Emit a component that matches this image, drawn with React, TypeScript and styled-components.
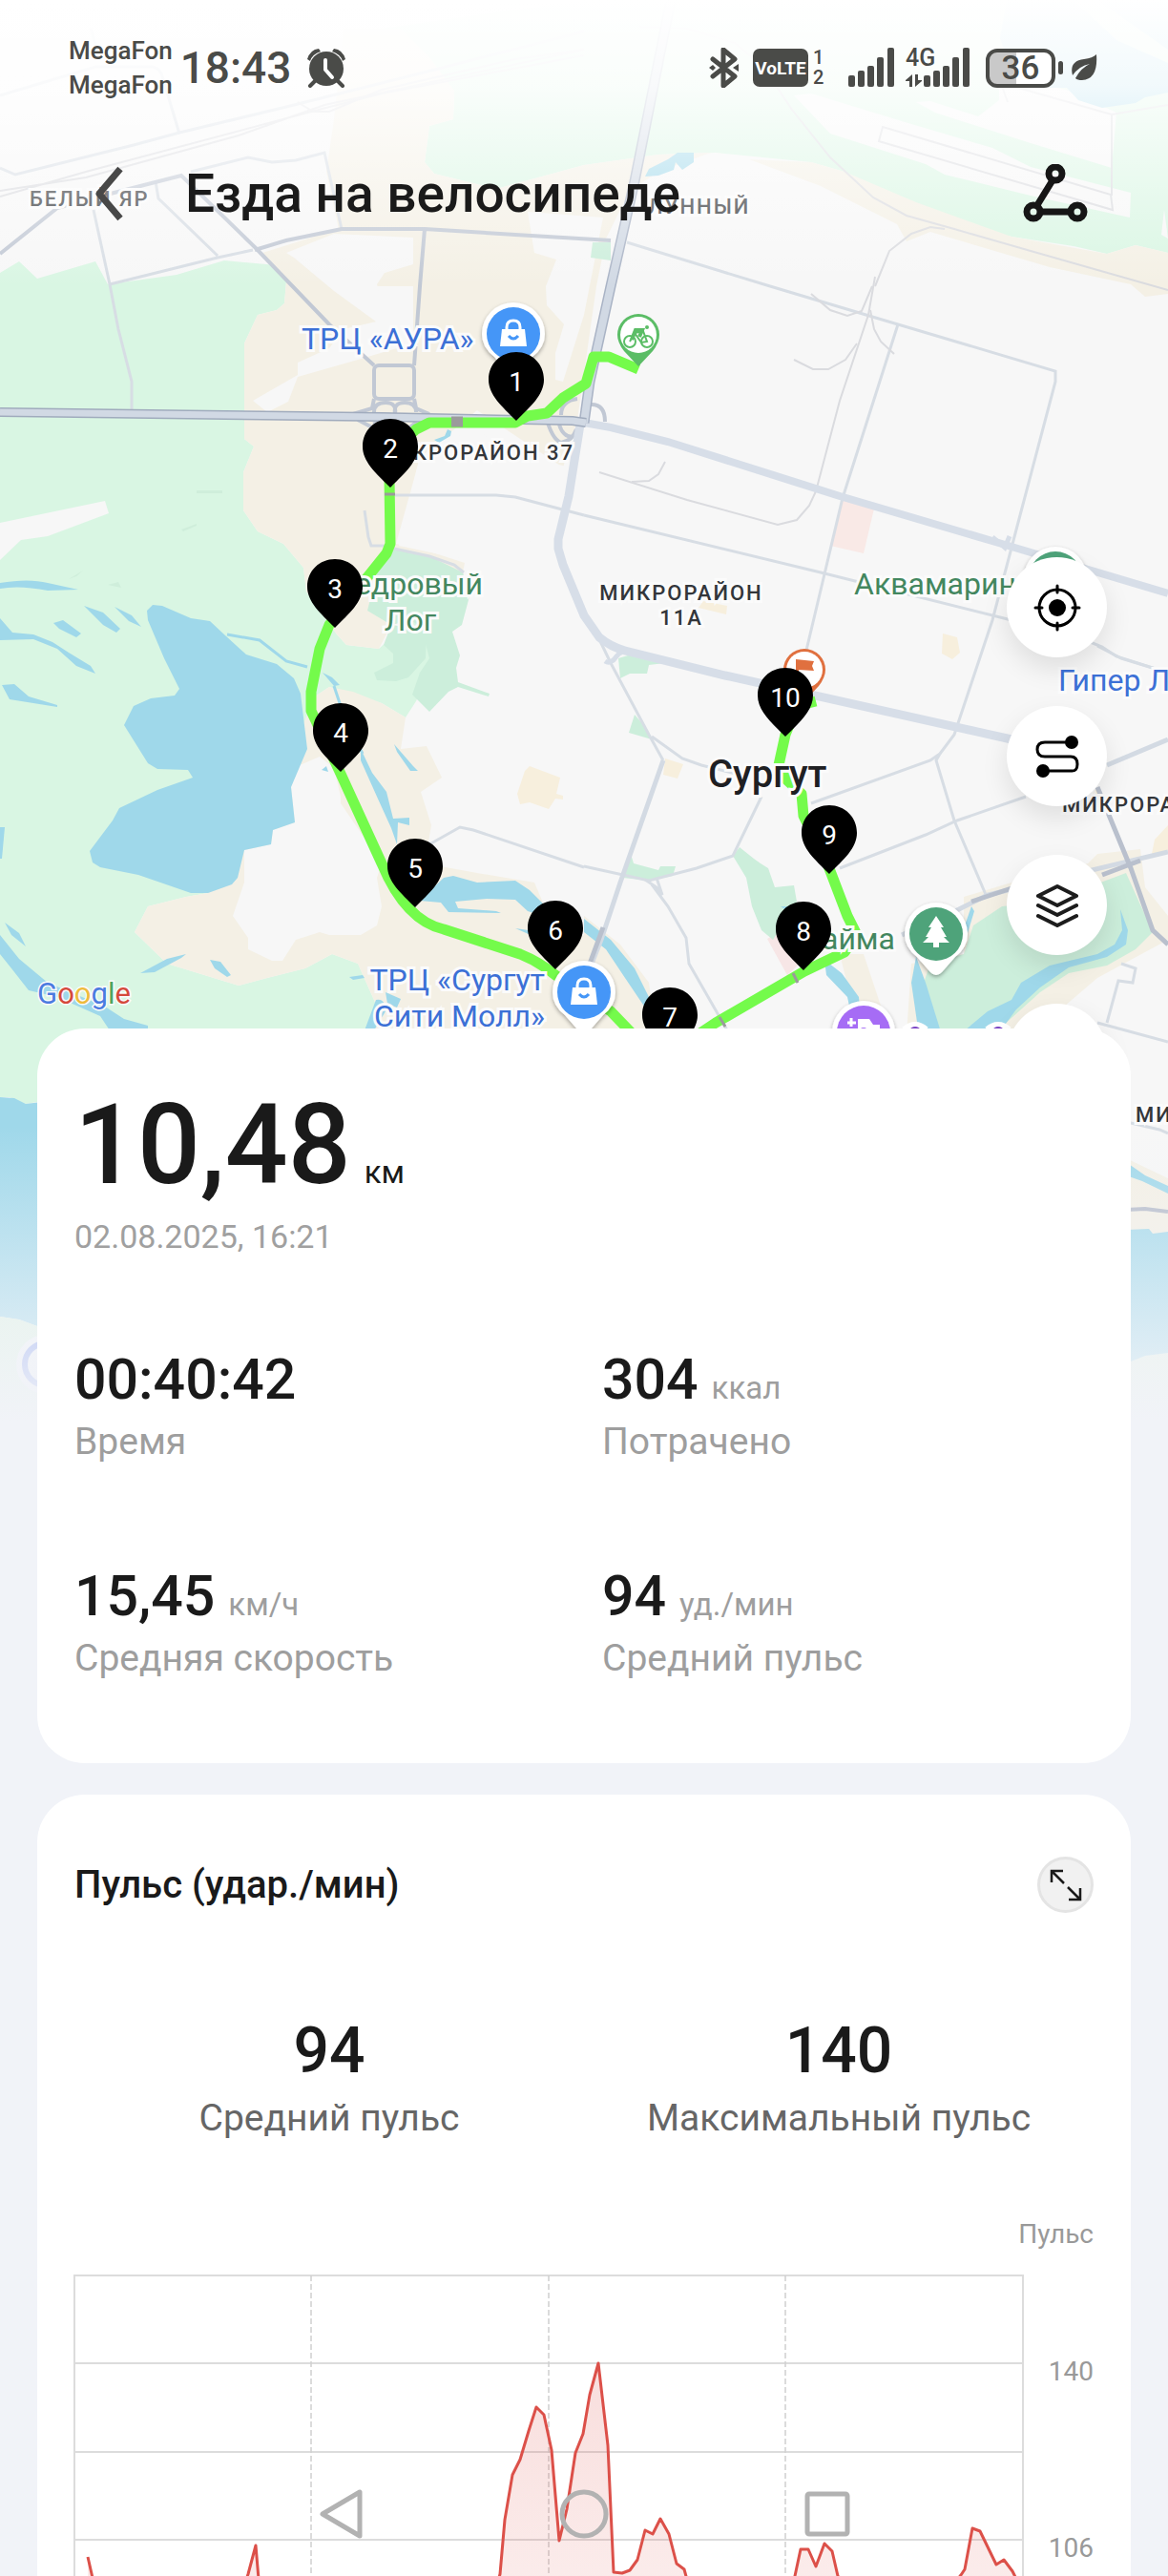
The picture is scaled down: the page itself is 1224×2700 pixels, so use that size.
import React from 'react';
import styled, { createGlobalStyle } from 'styled-components';

const GlobalStyle = createGlobalStyle`
  *, *::before, *::after { box-sizing: border-box; }
  html, body { margin: 0; padding: 0; }
  body { background: #f1f3f8; font-family: Roboto, "Noto Sans", sans-serif; color: #1a1a1a; }
  button { font: inherit; color: inherit; border: 0; padding: 0; background: none; cursor: pointer; }
  h1, h2, p, dl, dd, dt { margin: 0; font-weight: inherit; }
  svg { display: block; }
`;

const Screen = styled.div`
  position: relative;
  height: 100vh;
  overflow: hidden;
  background: #f1f3f8;
`;

const Scroller = styled.main`
  height: 100%;
  overflow-y: auto;
  scrollbar-width: none;
`;

const Content = styled.div`
  position: relative;
`;

/* ---------- map ---------- */

const MapLayer = styled.div`
  position: absolute;
  inset: 0 0 auto;
  height: 1490px;
  display: flex;
  justify-content: center;
  overflow: hidden;
  background: #f7f7f7;
  &::after {
    content: '';
    position: absolute;
    inset: 0;
    background:
      linear-gradient(#ffffff 0, rgba(255, 255, 255, 0.86) 90px, rgba(255, 255, 255, 0.4) 200px, rgba(255, 255, 255, 0) 300px),
      linear-gradient(rgba(241, 243, 248, 0) 1180px, #f1f3f8 1490px);
  }
`;

const MapCanvas = styled.div`
  position: relative;
  flex: none;
  width: 1224px;
  height: 1490px;
`;

const labelTones = { blue: '#3c70d6', green: '#43875f', dark: '#33363a', city: '#1f2023' };

const MapLabel = styled.span<{
  $x: number;
  $y: number;
  $tone: keyof typeof labelTones;
  $kind: 'place' | 'district' | 'city';
  $align?: 'left' | 'center' | 'right';
}>`
  position: absolute;
  left: ${(p) => p.$x}px;
  top: ${(p) => p.$y}px;
  transform: translateX(${(p) => (p.$align === 'center' ? '-50%' : p.$align === 'right' ? '-100%' : '0')});
  text-align: ${(p) => p.$align ?? 'left'};
  white-space: pre;
  color: ${(p) => labelTones[p.$tone]};
  font-size: ${(p) => ({ place: 32, district: 22, city: 40 })[p.$kind]}px;
  line-height: ${(p) => ({ place: 38, district: 26, city: 48 })[p.$kind]}px;
  font-weight: ${(p) => (p.$kind === 'place' ? 400 : 500)};
  letter-spacing: ${(p) => (p.$kind === 'district' ? '2px' : 'normal')};
  -webkit-text-stroke: 6px #fbfbfb;
  paint-order: stroke fill;
`;

const Pin = styled.div<{ $x: number; $y: number }>`
  position: absolute;
  left: ${(p) => p.$x - 29}px;
  top: ${(p) => p.$y - 72}px;
  width: 58px;
  height: 72px;
  padding-top: 14px;
  color: #fff;
  font-size: 28px;
  line-height: 36px;
  text-align: center;
  svg { position: absolute; inset: 0; z-index: -1; }
  isolation: isolate;
`;

const GoogleMark = styled.span`
  position: absolute;
  left: 39px;
  top: 1023px;
  font-size: 31px;
  line-height: 38px;
  color: #4c7be0;
  -webkit-text-stroke: 3px #fbfbfb;
  paint-order: stroke fill;
`;

const Tint = styled.span<{ $c: string }>`
  color: ${(p) => p.$c};
`;

const forest = 'M0 286L20 274L39 292L100 274L113 298L185 288L235 273L290 278L300 295L298 318L290 325L270 330L256 360L256 460L266 468L255 495L255 535L270 557L297 570L318 595L321 620L353 665L363 676L397 680L430 650L460 660L455 690L436 735L425 752L400 737L345 720L330 730L322 785L310 800L262 800L256 885L218 936L195 940L155 950L141 977L175 1010L250 1033L280 1025L320 1015L348 1000L375 1010L395 1055L380 1100L39 1155L27 1157L10 1150L0 1150Z';
const northForest = 'M400 30L612 0L1224 0L1224 265L1190 257L1160 266L1125 258L1060 248L1000 235L960 215L920 200L885 180L850 170L750 160L690 162L612 173L520 198L455 182L445 170L450 132L475 125L476 100Z';
const sandNorth = 'M350 125L360 30L420 30L450 60L476 95L475 125L450 132L445 170L455 182L520 198L612 173L690 162L745 160L690 180L660 200L635 250L625 300L605 440L590 490L500 430L440 480L415 570L450 578L487 590L485 600L430 650L410 655L397 680L363 676L353 665L321 620L318 595L297 570L270 557L255 535L255 495L266 468L256 460L256 360L270 330L290 325L298 318L300 295L275 265L355 240L342 180Z';
const sandSouth = 'M155 950L195 940L218 936L256 885L262 800L310 800L322 785L315 765L330 730L345 720L370 725L400 737L425 752L420 785L447 782L463 815L441 830L452 865L445 905L500 915L560 925L575 960L620 985L640 990L680 1030L690 1100L380 1100L395 1055L375 1010L348 1000L320 1015L280 1025L250 1033L175 1010L141 977Z';
const lake = 'M154 640L160 634L170 635L200 648L220 651L236 666L258 686L290 696L308 711L315 727L322 785L305 825L309 862L286 870L284 885L256 891L249 920L243 927L218 936L200 936L145 917L105 909L97 904L94 892L118 860L125 847L165 828L202 815L197 807L165 806L155 800L130 760L140 740L158 732L183 729L188 722L172 690L155 650Z';
const smallWater = [
  'M0 611Q30 606 50 611L82 618L50 619Q20 613 0 617Z',
  'M0 648L13 663L35 665L55 673L72 684L95 698L100 706L80 698L60 680L35 670L0 671Z',
  'M88 635L108 642L126 659L122 663L108 655Z',
  'M120 636L138 645L148 657L135 651Z',
  'M56 653L66 650L85 664L80 668L62 659Z',
  'M2 718L15 717L30 730L60 739L60 741L10 733Z',
  'M0 980L20 1005L50 1030L110 1055L130 1068L155 1075V1080L115 1080L105 1065L60 1045L30 1038L12 1015L0 1000Z',
  'M5 967L20 978L27 992L12 980Z',
  'M0 867H5L2 900H0Z',
  'M147 1020L175 1005L195 1000L190 1004L162 1019Z',
  'M220 1006L231 1008L242 1022L238 1024L225 1015Z',
  'M366 1024L380 1022L382 1025L370 1027Z',
  'M338 705L348 710L356 718L350 719Z',
  'M378 785L390 810L405 830L412 858L429 857V865L417 862L416 885L410 868L395 835L378 797Z',
  'M413 780L433 803L438 808L430 808L416 788Z',
  'M337 807L342 803L344 809Z',
  'M465 920L475 918L500 925L540 923L555 933L570 948L575 962L553 955L540 943L510 942L477 945L480 952L520 955L525 957L470 956L462 946L440 944Z',
  'M540 973L560 976L556 980Z',
  'M455 461L466 457L469 450L473 452L472 457L460 464Z',
  'M676 185L680 177L700 167L710 160L727 160V170L715 178L708 170L706 178L690 184Z',
  'M612 963L640 985L665 1015L680 1045L684 1068L655 1025L635 995L612 977Z',
  'M864 1006L882 1020L900 1045L902 1068L892 1064L888 1045L866 1022Z',
  'M818 950H834V956H824L832 960Z',
  'M1174 953L1182 975L1180 990L1160 1003L1120 1014L1090 1035L1065 1058L1045 1085H1005L1035 1060L1060 1048L1070 1030L1100 1012L1150 1000L1168 990L1176 975Z',
  'M960 1003L970 1030L987 1085L963 1085L955 1030Z',
  'M1018 950L1021 955L1014 978L1011 970Z',
  'M394 1048Q404 1046 404 1060L392 1080H382Z',
  'M404 1040L420 1047L416 1056L406 1052Z',
];
const park = [
  'M413 575L450 583L485 600L492 625L484 655L474 662L482 687L478 700L480 715L513 727L512 730L480 720L470 725L450 746L432 728L440 705L450 690L446 675V660L430 650L410 655L385 640L395 600Z',
  'M410 655L447 660L446 690L428 710L415 714L395 713L392 705L412 695V685L402 676Z',
  'M648 690L665 685L685 693L697 695L680 697L678 706L660 706L650 711Z',
  'M665 749L659 768L683 775L672 757Z',
  'M775 888L790 900L797 905L805 910L812 930L832 928L835 945L810 985L798 975L788 950L782 920L768 897Z',
  'M661 895L664 905L690 912L692 908L708 908L705 918L680 923L653 920Z',
  'M1180 915L1208 977L1190 995L1160 1012L1120 1020L1090 1040L1040 1085H985L968 1030L975 1010L1010 1000L1020 970L1050 950L1100 945Z',
  'M621 254L640 254L640 273L619 270Z',
];
const blocks = [
  'M550 808L555 803L587 815L583 832L590 834V838L582 837L575 848L555 841L545 843L542 832Z',
  'M988 664L1003 668L1006 684L998 691L987 685Z',
  'M737 630L762 635L761 644L732 637Z',
  'M697 795L716 801L710 816L695 812Z',
  'M1210 880L1224 865V892L1207 895Z',
  'M1150 825L1154 835L1140 840Z',
];
const streets = [
  'M0 176L16 183L140 152L188 139L300 112L420 82L612 33',
  'M0 100L100 70H160Q168 72 170 80L188 140M95 30L104 60',
  'M200 180L260 165L285 170L310 168L340 160L358 240',
  'M98 220L115 298L124 345L138 400L138 430',
  'M163 190L166 208L228 268M115 298L228 270L265 262',
  'M657 254L807 300L941 340L1106 389V400L1069 540L1040 650L1000 770L985 790',
  'M941 340L890 500L883 522L843 690',
  'M612 540L860 600L1060 650M1140 672L1155 678L1170 688L1224 705',
  'M414 519L520 519L540 521L612 540',
  'M382 535L386 563L389 572H406M413 575L450 583L476 592L486 600',
  'M628 670L640 695L680 770L695 797M683 772L715 795L735 802L775 812',
  'M798 835L768 897L730 910L680 923L612 908',
  'M850 842L975 797L985 790L981 797L1000 860L1034 940',
  'M880 910L970 875L1003 860L1075 835',
  'M450 885L482 867L496 870L612 909',
  'M683 927L700 950L719 983L722 1010L765 1085',
  'M1150 677L1175 690L1224 705M1175 1010L1190 1015L1187 1030L1172 1028L1160 1072',
  'M676 922L688 930L694 938L688 920',
];
const rails = [
  'M917 290L910 330L880 420L855 515L848 530L835 545L815 550L720 524L628 495',
  'M850 308L870 325L888 331L903 326L914 300M912 325L916 345L923 358L937 371',
  'M832 377L852 387H868L886 377L898 360M697 484L690 497L680 504L662 505',
  'M0 200L90 186L250 142L340 110L612 52M0 206L90 180L330 116L400 98L612 58M312 107L328 117H345L400 94L540 62L612 52',
  'M670 28L720 30L770 45L800 70L830 115L870 165L915 207L950 226L1000 240L1080 263L1224 304',
  'M917 300L932 263L955 245L975 238L990 240',
  'M925 133L1164 204L1166 220L921 148ZM1048 85L1056 107M1060 90L1165 120V205M1165 120L1224 110',
];
const arterials = [
  'M0 266L60 218L100 207L190 184L268 260L345 340L392 383',
  'M267 262L300 252L358 240L445 240L540 246L640 252M445 240L440 300L434 383',
];
const route = 'M669 387L638 374H622L614 402L590 417L573 433L553 436L540 443H450L436 450L412 472L408 500L409 570L405 580L345 655L335 680L326 725V745L357 811L400 905Q425 965 465 974L545 1000Q565 1008 582 1022L640 1060L690 1112L750 1072L843 1018L885 998L898 980L888 960L867 905L842 855L840 832L825 818L816 802L823 770L835 740L855 735';

function Poi({ x, y, color, children }: { x: number; y: number; color: string; children?: React.ReactNode }) {
  return (
    <g transform={`translate(${x} ${y})`}>
      <path d="M0 -33A33 33 0 0 1 33 0Q33 14 20 24L6 40Q0 46 -6 40L-20 24Q-33 14 -33 0A33 33 0 0 1 0 -33Z" fill="#fff" filter="url(#poiShadow)" />
      <circle r="28" fill={color} />
      {children}
    </g>
  );
}

const Bag = () => (
  <g>
    <path d="M-12 -5H12L14 13H-14Z" fill="#fff" />
    <path d="M-7 -4V-7Q-7 -14 0 -14Q7 -14 7 -7V-4" fill="none" stroke="#fff" strokeWidth="3" />
    <path d="M-5 2Q0 8 5 2" fill="none" stroke="#4596f7" strokeWidth="3" />
  </g>
);

function MapDrawing() {
  return (
    <svg width="1224" height="1490" viewBox="0 0 1224 1490" aria-hidden="true">
      <defs>
        <filter id="poiShadow" x="-30%" y="-30%" width="160%" height="170%">
          <feDropShadow dx="0" dy="2" stdDeviation="2" floodColor="#000" floodOpacity="0.35" />
        </filter>
      </defs>
      <path d={northForest} fill="#d9f6e3" />
      <path d="M832 100L850 98L955 130L1040 155L1080 175L1185 202L1184 228L1080 205L990 183L970 172L870 140Z" fill="#f7f7f7" />
      <path d="M960 107L975 106L1025 122L1047 105V92L1060 80L1120 95L1170 118L1165 176L1080 150L980 118Z" fill="#f7f7f7" />
      <path d="M1055 0L1048 40L1060 75L1100 92H1118L1130 105L1155 113L1190 108L1200 102L1224 97V0Z" fill="#9fd8ea" />
      <path d="M1125 0L1170 42L1224 66V52L1150 0Z" fill="#d9f6e3" />
      <path d="M1220 220L1217 246L1224 250Z" fill="#f7f7f7" />
      <path d="M785 167L850 170L885 180L960 212L1060 248L1160 266L1190 257L1224 265V308L1200 311L1185 298L1100 280L975 243L950 253L940 235L860 195Z" fill="#f4f0e5" />
      <path d={forest} fill="#d9f6e3" />
      <path d={sandNorth} fill="#f4f0e5" />
      <path d="M300 265L350 245L433 249V277L403 286L395 298L405 333L398 340L350 305L308 270Z" fill="#f7f7f7" />
      <path d="M395 300L403 335L360 345L345 365L312 380V393L265 420L280 432L302 421L312 395L375 377L433 360V300Z" fill="#f7f7f7" />
      <path d="M553 222L632 228L612 330L590 400L582 398V370L591 340L573 320L572 300L583 272L560 265Z" fill="#f7f7f7" />
      <path d="M440 478L500 447L525 475L600 490L590 560L480 585L418 572Z" fill="#f7f7f7" />
      <path d={sandSouth} fill="#f4f0e5" />
      <path d="M312 803L335 793L350 805L357 835V842L400 905L395 920L400 950L395 970L378 980L345 980L335 977L310 985L296 1007H285L260 995V983L244 960L256 925V891L284 885L286 870L309 862L305 825Z" fill="#f7f7f7" />
      <path d="M0 548L110 525L114 538L50 562L22 566L0 587Z" fill="#f7f7f7" />
      <path d="M206 514H233V517H206ZM190 555L206 549V551L192 557ZM113 613L124 610L127 616ZM72 607L87 598L80 604Z" fill="#cfeedb" />
      <path d="M1010 940L1060 925L1140 905L1150 895L1195 890L1200 930L1224 960V985L1150 1025L1080 1085H950L955 1010L1010 1000Z" fill="#f4f0e5" />
      <path d="M880 1000L905 1000L925 1060V1085H885L895 1060Z" fill="#f4f0e5" />
      <path d="M612 960L650 990L680 1030V1085H612Z" fill="#f4f0e5" />
      <path d="M882 524L916 533L905 580L870 572Z" fill="#f9e9e6" />
      <path d="M804 984L818 976L838 1010L825 1022Z" fill="#f7e6e6" />
      {park.map((d) => <path key={d} d={d} fill="#cceedb" />)}
      {blocks.map((d) => <path key={d} d={d} fill="#f7efdd" />)}
      <path d={lake} fill="#9fd8ea" />
      {smallWater.map((d) => <path key={d} d={d} fill="#9fd8ea" />)}
      <path d="M238 665L272 671L300 693L322 699M350 719L357 740M375 780L380 790" fill="none" stroke="#9fd8ea" strokeWidth="3" />
      <path d="M0 1150L15 1151L27 1157L60 1153V1390L39 1390L20 1383L0 1380Z" fill="#9fd8ea" />
      <path d="M0 1380L20 1383L39 1390H60V1490H0Z" fill="#dff5e2" />
      <path d="M1180 1214L1224 1235V1295H1180Z" fill="#f4f0e5" />
      <path d="M1180 1218L1200 1232L1224 1243V1251L1197 1238L1180 1232Z" fill="#9fd8ea" />
      <path d="M1180 1289L1204 1288L1208 1293L1224 1291V1490H1180Z" fill="#9fd8ea" />
      <path d="M1180 1429L1200 1421L1224 1418V1490H1180Z" fill="#e7f6e4" />
      <path d="M1180 1268L1200 1267L1224 1270" fill="none" stroke="#b3b9c8" strokeWidth="4" />
      <path d="M1150 1072L1224 1092M1185 1177L1215 1184L1224 1188" fill="none" stroke="#d7dde4" strokeWidth="3" />

      {streets.map((d) => <path key={d} d={d} fill="none" stroke="#d7dde4" strokeWidth="3" />)}
      {rails.map((d) => <path key={d} d={d} fill="none" stroke="#dadbdf" strokeWidth="2" />)}
      {arterials.map((d) => <path key={d} d={d} fill="none" stroke="#c1c8d4" strokeWidth="4" />)}
      <g fill="none" stroke="#c1c8d4" strokeWidth="4">
        <rect x="392" y="383" width="42" height="35" rx="5" />
        <path d="M392 418L390 428L370 434M434 418L436 428L450 434M375 440L405 456M392 432Q392 422 404 422T414 434M436 432Q436 422 424 422T414 434M392 442Q400 456 414 442Q424 456 436 442" />
        <path d="M605 418Q588 420 588 435M572 436Q578 460 588 464Q600 462 604 450M620 424Q634 424 634 442M586 445Q590 458 600 458" />
      </g>
      <path d="M612 443L640 448L700 463L880 520L1050 570L1224 622" fill="none" stroke="#d7dee8" strokeWidth="8" />
      <path d="M608 445L596 520L585 565V575L590 592L612 645L628 668Q640 678 655 682L760 708L1060 775" fill="none" stroke="#d7dee8" strokeWidth="9" />
      <path d="M634 693Q640 697 646 688Q650 682 660 682M1040 563L1053 574L1058 562" fill="none" stroke="#d7dee8" strokeWidth="5" />
      <path d="M695 797L650 925L630 985L620 1010M1160 802L1224 775M945 980L1005 953L1035 938L1224 893" fill="none" stroke="#d3dae3" strokeWidth="5" />
      <path d="M1018 945L1075 926M1155 917L1195 902M632 972L618 1010M1150 825L1185 910L1208 975L1224 990" fill="none" stroke="#b9c0cd" strokeWidth="5" />
      <path d="M703 0L665 190L640 300L618 400L612 443" fill="none" stroke="#a9b3c5" strokeWidth="11" />
      <path d="M703 0L665 190L640 300L618 400L612 443" fill="none" stroke="#d1d9e4" strokeWidth="8" />
      <path d="M0 432L400 437L600 441L614 443" fill="none" stroke="#a0abbd" strokeWidth="10" />
      <path d="M0 432L400 437L600 441L614 443" fill="none" stroke="#d1d9e4" strokeWidth="7" />

      <path d={route} fill="none" stroke="#74fb4b" strokeWidth="11" strokeLinejoin="round" />
      <path d="M403 518H414M754 1066L760 1076M831 1020L836 1030" fill="none" stroke="#9b9b9b" strokeWidth="3" />
      <path d="M473 442H485" stroke="#9b9b9b" strokeWidth="11" />

      <Poi x={538} y={350} color="#4596f7"><Bag /></Poi>
      <Poi x={612} y={1040} color="#4596f7"><Bag /></Poi>
      <Poi x={1106} y={606} color="#4ea37a" />
      <Poi x={981} y={979} color="#4ea37a">
        <path d="M0 -19L8 -7H5L11 3H8L14 9H3V14H-3V9H-14L-8 3H-11L-5 -7H-8Z" fill="#fff" />
      </Poi>
      <Poi x={905} y={1082} color="#a66cf5">
        <path d="M-13 -15V-6M-17 -10H-8" stroke="#fff" strokeWidth="3" />
        <path d="M-6 -14H6L10 -8H17V8H-12V-4H-6Z" fill="#fff" />
        <circle cy="0" r="5" fill="#a66cf5" />
      </Poi>
      <g fill="none" stroke="#fff" strokeWidth="14"><path d="M950 1082Q959 1074 968 1082M1037 1082Q1046 1074 1055 1082" /></g>
      <g fill="none" stroke="#7b45c4" strokeWidth="4"><path d="M953 1082Q959 1074 965 1082M1040 1082Q1046 1074 1052 1082" /></g>

      <g transform="translate(669 351)">
        <path d="M0 -22A22 22 0 0 1 22 0Q22 8 15 17L0 33L-15 17Q-22 8 -22 0A22 22 0 0 1 0 -22Z" fill="#5bbd66" />
        <circle r="19" fill="#fff" />
        <g fill="none" stroke="#5bbd66" strokeWidth="2">
          <circle cx="-9" cy="7" r="6" /><circle cx="9" cy="7" r="6" />
          <path d="M-9 7L-4 -2L3 8L9 7L5 -4M-4 -2L6 -4" />
          <path d="M-7 5L-3 -5L4 -5L1 2" strokeWidth="4" />
        </g>
        <circle cx="9" cy="-8" r="2" fill="#5bbd66" />
      </g>
      <g transform="translate(843 702)">
        <path d="M0 -22A22 22 0 0 1 22 0Q22 8 15 17L0 33L-15 17Q-22 8 -22 0A22 22 0 0 1 0 -22Z" fill="#e0703f" />
        <circle r="19" fill="#fff" />
        <path d="M-9 -11L10 -9L8 -4L10 1L-6 0V9H-9Z" fill="#e0703f" />
      </g>
      <circle cx="48" cy="1430" r="31" fill="#f3f5f8" />
      <circle cx="48" cy="1430" r="22" fill="none" stroke="#7d96ee" strokeWidth="6" />
    </svg>
  );
}

const pins = [
  { n: 1, x: 541, y: 441 },
  { n: 2, x: 409, y: 511 },
  { n: 3, x: 351, y: 658 },
  { n: 4, x: 357, y: 809 },
  { n: 5, x: 435, y: 951 },
  { n: 6, x: 582, y: 1016 },
  { n: 7, x: 702, y: 1107 },
  { n: 8, x: 842, y: 1017 },
  { n: 9, x: 869, y: 916 },
  { n: 10, x: 823, y: 772 },
];

function RouteMap() {
  return (
    <MapLayer>
      <MapCanvas>
        <MapDrawing />
        <MapLabel $x={31} $y={196} $tone="dark" $kind="district">БЕЛЫЙ ЯР</MapLabel>
        <MapLabel $x={679} $y={204} $tone="dark" $kind="district">ЛУННЫЙ</MapLabel>
        <MapLabel $x={316} $y={336} $tone="blue" $kind="place">ТРЦ «АУРА»</MapLabel>
        <MapLabel $x={602} $y={462} $tone="dark" $kind="district" $align="right">КРОРАЙОН 37</MapLabel>
        <MapLabel $x={506} $y={593} $tone="green" $kind="place" $align="right">едровый</MapLabel>
        <MapLabel $x={430} $y={631} $tone="green" $kind="place" $align="center">Лог</MapLabel>
        <MapLabel $x={714} $y={609} $tone="dark" $kind="district" $align="center">{'МИКРОРАЙОН\n11А'}</MapLabel>
        <MapLabel $x={895} $y={593} $tone="green" $kind="place">Аквамарин</MapLabel>
        <MapLabel $x={1109} $y={694} $tone="blue" $kind="place">Гипер Л</MapLabel>
        <MapLabel $x={742} $y={788} $tone="city" $kind="city">Сургут</MapLabel>
        <MapLabel $x={1113} $y={831} $tone="dark" $kind="district">МИКРОРА</MapLabel>
        <MapLabel $x={938} $y={965} $tone="green" $kind="place" $align="right">айма</MapLabel>
        <MapLabel $x={571} $y={1008} $tone="blue" $kind="place" $align="right">{'ТРЦ «Сургут\nСити Молл»'}</MapLabel>
        <MapLabel $x={1190} $y={1156} $tone="dark" $kind="district">МИ</MapLabel>
        <GoogleMark>
          G<Tint $c="#d5493c">o</Tint><Tint $c="#eebb3c">o</Tint>g<Tint $c="#4ea45c">l</Tint><Tint $c="#d5493c">e</Tint>
        </GoogleMark>
        {pins.map((p) => (
          <Pin key={p.n} $x={p.x} $y={p.y}>
            <svg width="58" height="72" viewBox="0 0 58 72" aria-hidden="true">
              <path d="M29 0C45 0 58 12 58 29C58 45 44 57 29 72C14 57 0 45 0 29C0 12 13 0 29 0Z" />
            </svg>
            {p.n}
          </Pin>
        ))}
      </MapCanvas>
    </MapLayer>
  );
}

/* ---------- system status bar ---------- */

const StatusBar = styled.div`
  position: relative;
  display: flex;
  align-items: center;
  justify-content: space-between;
  height: 142px;
  padding: 0 74px 0 72px;
  color: #4a4b48;
  font-weight: 500;
`;

const StatusGroup = styled.div<{ $gap: number }>`
  display: flex;
  align-items: center;
  gap: ${(p) => p.$gap}px;
`;

const Carriers = styled.div`
  font-size: 26px;
  line-height: 36px;
`;

const Clock = styled.time`
  font-size: 46px;
  line-height: 56px;
`;

const StatusIcons = styled.div`
  display: flex;
  align-items: center;
`;

const VolteBadge = styled.span`
  display: flex;
  align-items: center;
  justify-content: center;
  width: 58px;
  height: 40px;
  margin-left: 14px;
  border-radius: 7px;
  background: #4a4b48;
  color: #fff;
  font-size: 19px;
  font-weight: 700;
`;

const SimNumbers = styled.span`
  display: grid;
  margin: 0 26px 0 5px;
  width: 11px;
  font-size: 20px;
  line-height: 21px;
`;

const SignalColumn = styled.span`
  display: flex;
  position: relative;
  margin-left: 12px;
`;

const NetworkType = styled.span`
  position: absolute;
  left: 0;
  top: -2px;
  font-size: 25px;
  line-height: 26px;
`;

const Battery = styled.span`
  display: flex;
  align-items: center;
  justify-content: center;
  width: 73px;
  height: 41px;
  margin-left: 17px;
  border: 4px solid #4a4b48;
  border-radius: 12px;
  background: linear-gradient(90deg, #c9c9c9 28px, #ffffff 28px);
  font-size: 35px;
  line-height: 33px;
`;

const BatteryCap = styled.span`
  width: 5px;
  height: 14px;
  margin: 0 8px 0 3px;
  border-radius: 3px;
  background: #4a4b48;
`;

const bars: [number, number][] = [[0, 29], [10, 24], [20, 19], [30, 10], [41, 0]];

const SignalBars = ({ offset = 0 }: { offset?: number }) => (
  <svg width={48 + offset} height="42" viewBox={`0 0 ${48 + offset} 42`} fill="#4a4b48" aria-hidden="true">
    {bars.map(([x, y]) => <rect key={x} x={x + offset} y={y} width="7" height={41 - y} rx="2" />)}
    {offset > 0 && <path d="M0 34L7 28V41H4V35H0ZM17 35L10 41V28H13V34H17Z" />}
  </svg>
);

function SystemStatus() {
  return (
    <StatusBar>
      <StatusGroup $gap={8}>
        <Carriers>
          <div>MegaFon</div>
          <div>MegaFon</div>
        </Carriers>
        <StatusGroup $gap={16}>
          <Clock>18:43</Clock>
          <svg width="42" height="42" viewBox="0 0 42 42" aria-label="Будильник">
            <path d="M1 12Q4 2 13 1L15 4Q6 7 4 14ZM41 12Q38 2 29 1L27 4Q36 7 38 14Z" fill="#4a4b48" />
            <circle cx="21" cy="22" r="18" fill="#4a4b48" />
            <path d="M9 35L4 40M33 35L38 40" stroke="#4a4b48" strokeWidth="4" strokeLinecap="round" />
            <path d="M20 13V23L27 31" fill="none" stroke="#fff" strokeWidth="4" strokeLinecap="round" strokeLinejoin="round" />
          </svg>
        </StatusGroup>
      </StatusGroup>
      <StatusIcons>
        <svg width="32" height="42" viewBox="0 0 32 42" aria-label="Bluetooth">
          <path d="M4 12L27 30L15 40V2L27 12L4 30" fill="none" stroke="#4a4b48" strokeWidth="5" strokeLinejoin="round" strokeLinecap="round" />
          <path d="M0 21L4 18L7 21L4 24ZM25 21L31 17V25Z" fill="#4a4b48" />
        </svg>
        <VolteBadge>VoLTE</VolteBadge>
        <SimNumbers><span>1</span><span>2</span></SimNumbers>
        <SignalBars />
        <SignalColumn>
          <NetworkType>4G</NetworkType>
          <SignalBars offset={19} />
        </SignalColumn>
        <Battery>36</Battery>
        <BatteryCap />
        <svg width="28" height="28" viewBox="0 0 28 28" aria-hidden="true">
          <path d="M27 0Q29 26 12 27Q7 27 5 25Q11 14 20 10Q9 12 2 22Q-2 7 14 5Q23 4 27 0Z" fill="#4a4b48" />
        </svg>
      </StatusIcons>
    </StatusBar>
  );
}

/* ---------- header ---------- */

const TopBar = styled.header`
  position: relative;
  display: flex;
  align-items: center;
  height: 122px;
  padding: 0 80px 0 88px;
`;

const IconButton = styled.button`
  display: flex;
  align-items: center;
  justify-content: center;
  width: 76px;
  height: 76px;
`;

const BackButton = styled(IconButton)`
  width: 56px;
`;

const Title = styled.h1`
  flex: 1;
  margin-left: 50px;
  font-size: 55px;
  line-height: 66px;
  font-weight: 500;
`;

const MapControls = styled.div`
  position: relative;
  display: flex;
  flex-direction: column;
  align-items: flex-end;
  gap: 51px;
  padding: 320px 64px 0 0;
`;

const RoundButton = styled.button`
  display: flex;
  align-items: center;
  justify-content: center;
  width: 105px;
  height: 105px;
  border-radius: 50%;
  background: #fff;
  box-shadow: 0 12px 28px rgba(0, 0, 0, 0.1);
`;

/* ---------- cards ---------- */

const Sheet = styled.div`
  position: relative;
  display: grid;
  gap: 33px;
  margin-top: -79px;
  padding: 0 39px 140px;
`;

const Card = styled.section<{ $top: number }>`
  padding: ${(p) => p.$top}px 39px 86px;
  border-radius: 50px;
  background: #fff;
`;

const Distance = styled.p`
  display: flex;
  align-items: baseline;
  gap: 14px;
  font-size: 116px;
  line-height: 140px;
  font-weight: 500;
`;

const DistanceUnit = styled.span`
  font-size: 33px;
  line-height: 40px;
  font-weight: 400;
`;

const DateLine = styled.p`
  margin-top: 6px;
  color: #a0a0a0;
  font-size: 34px;
  line-height: 40px;
`;

const Metrics = styled.dl`
  display: grid;
  grid-template-columns: 1fr 1fr;
  gap: 103px 38px;
  margin-top: 95px;
`;

const Metric = styled.div`
  display: flex;
  flex-direction: column-reverse;
  gap: 6px;
`;

const MetricName = styled.dt<{ $tone?: string }>`
  color: ${(p) => p.$tone ?? '#9e9e9e'};
  font-size: 39px;
  line-height: 48px;
`;

const MetricValue = styled.dd`
  display: flex;
  align-items: baseline;
  gap: 14px;
  font-size: 59px;
  line-height: 70px;
  font-weight: 500;
`;

const Unit = styled.span`
  color: #9e9e9e;
  font-size: 33px;
  line-height: 40px;
  font-weight: 400;
`;

const CardHeader = styled.div`
  display: flex;
  align-items: center;
  justify-content: space-between;
`;

const CardTitle = styled.h2`
  font-size: 40px;
  line-height: 59px;
  font-weight: 500;
`;

const ExpandButton = styled.button`
  display: flex;
  align-items: center;
  justify-content: center;
  width: 59px;
  height: 59px;
  border: 3px solid #e4e4e4;
  border-radius: 50%;
  background: #f1f1f1;
`;

const Summary = styled.dl`
  display: grid;
  grid-template-columns: 1fr 1fr;
  margin-top: 105px;
  text-align: center;
`;

const SummaryValue = styled.dd`
  font-size: 66px;
  line-height: 80px;
  font-weight: 500;
`;

const AxisTitle = styled.p`
  margin-top: 80px;
  color: #999;
  font-size: 28px;
  line-height: 36px;
  text-align: right;
`;

const ChartRow = styled.div`
  display: grid;
  grid-template-columns: 1fr 74px;
  margin-top: 24px;
`;

const Plot = styled.svg`
  width: 100%;
  height: 465px;
  overflow: visible;
`;

const Ticks = styled.div`
  display: flex;
  flex-direction: column;
  gap: 149px;
  padding-top: 84px;
  color: #999;
  font-size: 28px;
  line-height: 36px;
  text-align: right;
`;

const pulse: [number, number][] = [
  [14, 296], [19, 318], [40, 360], [110, 380], [170, 350], [182, 314], [190, 284], [193, 319], [205, 370], [320, 390], [430, 370],
  [446, 314], [451, 257], [459, 210], [467, 194], [476, 164], [484, 139], [492, 147], [500, 184], [508, 279], [516, 246],
  [525, 187], [533, 167], [540, 126], [549, 93], [559, 179], [565, 312], [574, 313], [582, 310], [590, 299], [598, 268],
  [606, 272], [614, 256], [623, 272], [631, 303], [639, 309], [642, 320], [680, 370], [740, 350], [755, 316], [761, 288],
  [769, 288], [777, 306], [786, 282], [794, 290], [800, 316], [840, 370], [900, 350], [929, 315], [933, 309], [941, 266],
  [949, 269], [966, 304], [974, 299], [983, 311], [988, 321],
];
const pulseLine = pulse.map(([x, y]) => `${x},${y}`).join(' ');

function PulseChart() {
  return (
    <Plot viewBox="0 0 994 465" preserveAspectRatio="none" role="img" aria-label="График пульса">
      <defs>
        <linearGradient id="pulseFill" x1="0" y1="0" x2="0" y2="1">
          <stop offset="0" stopColor="#dc5049" stopOpacity="0.19" />
          <stop offset="1" stopColor="#dc5049" stopOpacity="0.06" />
        </linearGradient>
      </defs>
      <g fill="none" stroke="#dcdcdc" strokeWidth="2">
        <path d="M0 465V1H994V465M0 93H994M0 186H994M0 278H994M0 371H994" />
        <path d="M248 1V465M497 1V465M745 1V465" strokeDasharray="6 3" strokeWidth="1.5" stroke="#cfcfcf" />
      </g>
      <polygon points={`14,465 ${pulseLine} 988,465`} fill="url(#pulseFill)" />
      <polyline points={pulseLine} fill="none" stroke="#dc5049" strokeWidth="3" strokeLinejoin="round" />
    </Plot>
  );
}

/* ---------- system navigation ---------- */

const NavBar = styled.nav`
  position: absolute;
  inset: auto 0 0;
  display: flex;
  align-items: center;
  justify-content: center;
  gap: 195px;
  height: 130px;
`;

const NavButton = styled.button`
  display: flex;
  align-items: center;
  justify-content: center;
  width: 60px;
  height: 60px;
`;

const NavIcon = ({ children }: { children: React.ReactNode }) => (
  <svg width="60" height="60" viewBox="0 0 60 60" fill="none" stroke="#b2b2b2" strokeWidth="5" strokeLinejoin="round" aria-hidden="true">
    {children}
  </svg>
);

export default function App() {
  return (
    <Screen>
      <GlobalStyle />
      <Scroller>
        <Content>
          <RouteMap />
          <SystemStatus />
          <TopBar>
            <BackButton aria-label="Назад">
              <svg width="34" height="60" viewBox="0 0 34 60" aria-hidden="true">
                <path d="M27 4L5 30L27 56" fill="none" stroke="#484848" strokeWidth="7" strokeLinejoin="round" />
              </svg>
            </BackButton>
            <Title>Езда на велосипеде</Title>
            <IconButton aria-label="Поделиться">
              <svg width="68" height="62" viewBox="0 0 68 62" fill="none" stroke="#161616" strokeWidth="7" aria-hidden="true">
                <circle cx="34" cy="10" r="7" />
                <circle cx="11" cy="50" r="7" />
                <circle cx="57" cy="50" r="7" />
                <path d="M31 17L15 43M19 50H50" />
              </svg>
            </IconButton>
          </TopBar>

          <MapControls>
            <RoundButton aria-label="Моё местоположение">
              <svg width="50" height="50" viewBox="0 0 50 50" fill="none" stroke="#000" strokeWidth="3" strokeLinecap="round" aria-hidden="true">
                <circle cx="25" cy="25" r="19" />
                <circle cx="25" cy="25" r="9" fill="#000" stroke="none" />
                <path d="M25 2V9M25 41V48M2 25H9M41 25H48" />
              </svg>
            </RoundButton>
            <RoundButton aria-label="Маршрут">
              <svg width="46" height="46" viewBox="0 0 46 46" fill="none" stroke="#000" strokeWidth="3" aria-hidden="true">
                <path d="M38 8H10Q2 8 2 15.500T10 23H37Q44 23 44 31T37 38H8" />
                <circle cx="38" cy="8" r="7" fill="#000" stroke="none" />
                <circle cx="8" cy="38" r="7" fill="#000" stroke="none" />
              </svg>
            </RoundButton>
            <RoundButton aria-label="Слои карты">
              <svg width="46" height="46" viewBox="0 0 46 46" fill="none" stroke="#1c1c1c" strokeWidth="4" strokeLinejoin="round" strokeLinecap="round" aria-hidden="true">
                <path d="M23 3L43 13L23 23L3 13ZM3 23L23 33L43 23M3 34L23 44L43 34" />
              </svg>
            </RoundButton>
            <RoundButton aria-label="Ещё" />
          </MapControls>

          <Sheet>
            <Card $top={52}>
              <Distance>10,48<DistanceUnit>км</DistanceUnit></Distance>
              <DateLine>02.08.2025, 16:21</DateLine>
              <Metrics>
                <Metric>
                  <MetricName>Время</MetricName>
                  <MetricValue>00:40:42</MetricValue>
                </Metric>
                <Metric>
                  <MetricName>Потрачено</MetricName>
                  <MetricValue>304<Unit>ккал</Unit></MetricValue>
                </Metric>
                <Metric>
                  <MetricName>Средняя скорость</MetricName>
                  <MetricValue>15,45<Unit>км/ч</Unit></MetricValue>
                </Metric>
                <Metric>
                  <MetricName>Средний пульс</MetricName>
                  <MetricValue>94<Unit>уд./мин</Unit></MetricValue>
                </Metric>
              </Metrics>
            </Card>

            <Card $top={65}>
              <CardHeader>
                <CardTitle>Пульс (удар./мин)</CardTitle>
                <ExpandButton aria-label="Развернуть">
                  <svg width="34" height="34" viewBox="0 0 34 34" fill="none" stroke="#1a1a1a" strokeWidth="2.500" aria-hidden="true">
                    <path d="M2 14V2H14M2 2L15 15M32 20V32H20M32 32L19 19" />
                  </svg>
                </ExpandButton>
              </CardHeader>
              <Summary>
                <Metric>
                  <MetricName $tone="#666">Средний пульс</MetricName>
                  <SummaryValue>94</SummaryValue>
                </Metric>
                <Metric>
                  <MetricName $tone="#666">Максимальный пульс</MetricName>
                  <SummaryValue>140</SummaryValue>
                </Metric>
              </Summary>
              <AxisTitle>Пульс</AxisTitle>
              <ChartRow>
                <PulseChart />
                <Ticks>
                  <span>140</span>
                  <span>106</span>
                </Ticks>
              </ChartRow>
            </Card>
          </Sheet>
        </Content>
      </Scroller>

      <NavBar aria-label="Системная навигация">
        <NavButton aria-label="Назад"><NavIcon><path d="M11 30L50 7V53Z" /></NavIcon></NavButton>
        <NavButton aria-label="Домой"><NavIcon><circle cx="30" cy="30" r="23" /></NavIcon></NavButton>
        <NavButton aria-label="Недавние"><NavIcon><rect x="9" y="9" width="42" height="42" rx="2" /></NavIcon></NavButton>
      </NavBar>
    </Screen>
  );
}
